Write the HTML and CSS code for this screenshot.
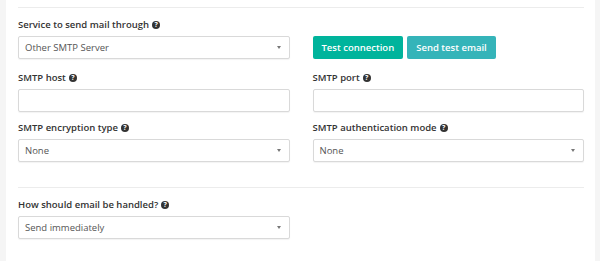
FILE: index.html
```html
<!DOCTYPE html>
<html>
<head>
<meta charset="utf-8">
<link rel="stylesheet" href="styles.css">
</head>
<body>
<div class="page">
  <div class="panel">
    <div class="topline"></div>
    <div class="grid row1">
      <div class="field">
        <label class="lbl">Service to send mail through <span class="help">?</span></label>
        <div class="control select"><span>Other SMTP Server</span><i class="caret"></i></div>
      </div>
      <div class="buttons">
        <button class="btn btn-success">Test connection</button>
        <button class="btn btn-info">Send test email</button>
      </div>
    </div>
    <div class="grid row2">
      <div class="field">
        <label class="lbl">SMTP host <span class="help">?</span></label>
        <div class="control"></div>
      </div>
      <div class="field">
        <label class="lbl">SMTP port <span class="help">?</span></label>
        <div class="control"></div>
      </div>
    </div>
    <div class="grid row3">
      <div class="field">
        <label class="lbl">SMTP encryption type <span class="help">?</span></label>
        <div class="control select"><span>None</span><i class="caret"></i></div>
      </div>
      <div class="field">
        <label class="lbl">SMTP authentication mode <span class="help">?</span></label>
        <div class="control select"><span>None</span><i class="caret"></i></div>
      </div>
    </div>
    <div class="divider"></div>
    <div class="grid row4">
      <div class="field">
        <label class="lbl">How should email be handled? <span class="help">?</span></label>
        <div class="control select"><span>Send immediately</span><i class="caret"></i></div>
      </div>
    </div>
  </div>
</div>
</body>
</html>
```
FILE: styles.css
```css
* { box-sizing: border-box; }
html, body { margin: 0; padding: 0; }
body {
  background: #f5f5f5;
  font-family: "Open Sans", "Liberation Sans", sans-serif;
  color: #333;
  width: 600px;
  height: 261px;
  overflow: hidden;
}
.page {
  padding: 0 5px 0 6px;
  height: 261px;
}
.panel {
  background: #fff;
  height: 261px;
  padding: 0 11px 0 12px;
}
.topline {
  height: 8px;
  border-bottom: 1px solid #ececec;
}
.grid {
  display: grid;
  grid-template-columns: 1fr 1fr;
  column-gap: 23px;
}
.row1 { margin-top: 10px; }
.row2 { margin-top: 12px; }
.row3 { margin-top: 9px; }
.row4 { margin-top: 10px; }
.field { display: flex; flex-direction: column; }
.lbl {
  font-size: 9.5px;
  font-weight: 600;
  line-height: 14px;
  height: 14px;
  margin-bottom: 4px;
  color: #333;
  display: flex;
  align-items: center;
  gap: 3px;
}
.help {
  display: inline-flex;
  align-items: center;
  justify-content: center;
  width: 8px;
  height: 8px;
  border-radius: 50%;
  background: #333;
  color: #fff;
  font-size: 7px;
  font-weight: 700;
  line-height: 8px;
}
.control {
  height: 23px;
  border: 1px solid #d9d9d9;
  border-radius: 2px;
  box-shadow: 0 1px 1px rgba(0,0,0,0.05);
  background: #fff;
  display: flex;
  align-items: center;
  padding: 0 8px 0 6px;
  font-size: 9.5px;
  color: #555;
}
.select span { flex: 1; }
.caret {
  width: 0;
  height: 0;
  border-left: 2.5px solid transparent;
  border-right: 2.5px solid transparent;
  border-top: 3px solid #777;
}
.buttons {
  display: flex;
  gap: 4px;
  padding-top: 18px;
}
.btn {
  height: 23px;
  border: 0;
  border-radius: 2px;
  color: #fff;
  font-family: "Open Sans", "Liberation Sans", sans-serif;
  font-size: 9.5px;
  font-weight: 600;
  padding: 0 9px;
  line-height: 23px;
}
.btn-success { background: #00b49c; }
.btn-info { background: #35b4b9; }
.divider {
  margin-top: 25px;
  border-top: 1px solid #ececec;
}
```
